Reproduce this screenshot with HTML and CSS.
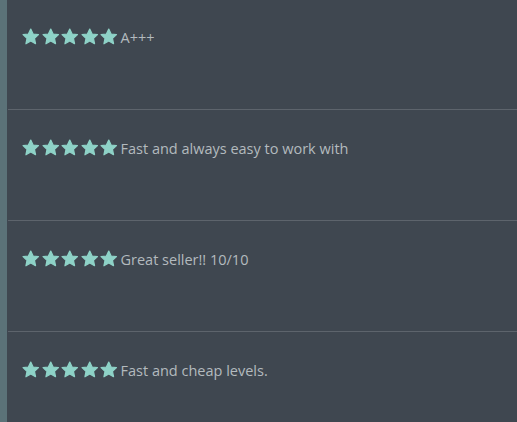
FILE: index.html
```html
<!DOCTYPE html>
<html>
<head>
<meta charset="utf-8">
<link rel="stylesheet" href="styles.css">
</head>
<body>
<div class="panel">
  <div class="list">
    <div class="review">
      <span class="stars">
        <svg class="star" viewBox="0 0 24 24"><path d="M12 2.5l2.9 6.1 6.6.8-4.9 4.6 1.3 6.6L12 17.3l-5.9 3.3 1.3-6.6-4.9-4.6 6.6-.8z"/></svg>
        <svg class="star" viewBox="0 0 24 24"><path d="M12 2.5l2.9 6.1 6.6.8-4.9 4.6 1.3 6.6L12 17.3l-5.9 3.3 1.3-6.6-4.9-4.6 6.6-.8z"/></svg>
        <svg class="star" viewBox="0 0 24 24"><path d="M12 2.5l2.9 6.1 6.6.8-4.9 4.6 1.3 6.6L12 17.3l-5.9 3.3 1.3-6.6-4.9-4.6 6.6-.8z"/></svg>
        <svg class="star" viewBox="0 0 24 24"><path d="M12 2.5l2.9 6.1 6.6.8-4.9 4.6 1.3 6.6L12 17.3l-5.9 3.3 1.3-6.6-4.9-4.6 6.6-.8z"/></svg>
        <svg class="star" viewBox="0 0 24 24"><path d="M12 2.5l2.9 6.1 6.6.8-4.9 4.6 1.3 6.6L12 17.3l-5.9 3.3 1.3-6.6-4.9-4.6 6.6-.8z"/></svg>
      </span>
      <span class="text">A+++</span>
    </div>
    <div class="review">
      <span class="stars">
        <svg class="star" viewBox="0 0 24 24"><path d="M12 2.5l2.9 6.1 6.6.8-4.9 4.6 1.3 6.6L12 17.3l-5.9 3.3 1.3-6.6-4.9-4.6 6.6-.8z"/></svg>
        <svg class="star" viewBox="0 0 24 24"><path d="M12 2.5l2.9 6.1 6.6.8-4.9 4.6 1.3 6.6L12 17.3l-5.9 3.3 1.3-6.6-4.9-4.6 6.6-.8z"/></svg>
        <svg class="star" viewBox="0 0 24 24"><path d="M12 2.5l2.9 6.1 6.6.8-4.9 4.6 1.3 6.6L12 17.3l-5.9 3.3 1.3-6.6-4.9-4.6 6.6-.8z"/></svg>
        <svg class="star" viewBox="0 0 24 24"><path d="M12 2.5l2.9 6.1 6.6.8-4.9 4.6 1.3 6.6L12 17.3l-5.9 3.3 1.3-6.6-4.9-4.6 6.6-.8z"/></svg>
        <svg class="star" viewBox="0 0 24 24"><path d="M12 2.5l2.9 6.1 6.6.8-4.9 4.6 1.3 6.6L12 17.3l-5.9 3.3 1.3-6.6-4.9-4.6 6.6-.8z"/></svg>
      </span>
      <span class="text">Fast and always easy to work with</span>
    </div>
    <div class="review">
      <span class="stars">
        <svg class="star" viewBox="0 0 24 24"><path d="M12 2.5l2.9 6.1 6.6.8-4.9 4.6 1.3 6.6L12 17.3l-5.9 3.3 1.3-6.6-4.9-4.6 6.6-.8z"/></svg>
        <svg class="star" viewBox="0 0 24 24"><path d="M12 2.5l2.9 6.1 6.6.8-4.9 4.6 1.3 6.6L12 17.3l-5.9 3.3 1.3-6.6-4.9-4.6 6.6-.8z"/></svg>
        <svg class="star" viewBox="0 0 24 24"><path d="M12 2.5l2.9 6.1 6.6.8-4.9 4.6 1.3 6.6L12 17.3l-5.9 3.3 1.3-6.6-4.9-4.6 6.6-.8z"/></svg>
        <svg class="star" viewBox="0 0 24 24"><path d="M12 2.5l2.9 6.1 6.6.8-4.9 4.6 1.3 6.6L12 17.3l-5.9 3.3 1.3-6.6-4.9-4.6 6.6-.8z"/></svg>
        <svg class="star" viewBox="0 0 24 24"><path d="M12 2.5l2.9 6.1 6.6.8-4.9 4.6 1.3 6.6L12 17.3l-5.9 3.3 1.3-6.6-4.9-4.6 6.6-.8z"/></svg>
      </span>
      <span class="text">Great seller!! 10/10</span>
    </div>
    <div class="review">
      <span class="stars">
        <svg class="star" viewBox="0 0 24 24"><path d="M12 2.5l2.9 6.1 6.6.8-4.9 4.6 1.3 6.6L12 17.3l-5.9 3.3 1.3-6.6-4.9-4.6 6.6-.8z"/></svg>
        <svg class="star" viewBox="0 0 24 24"><path d="M12 2.5l2.9 6.1 6.6.8-4.9 4.6 1.3 6.6L12 17.3l-5.9 3.3 1.3-6.6-4.9-4.6 6.6-.8z"/></svg>
        <svg class="star" viewBox="0 0 24 24"><path d="M12 2.5l2.9 6.1 6.6.8-4.9 4.6 1.3 6.6L12 17.3l-5.9 3.3 1.3-6.6-4.9-4.6 6.6-.8z"/></svg>
        <svg class="star" viewBox="0 0 24 24"><path d="M12 2.5l2.9 6.1 6.6.8-4.9 4.6 1.3 6.6L12 17.3l-5.9 3.3 1.3-6.6-4.9-4.6 6.6-.8z"/></svg>
        <svg class="star" viewBox="0 0 24 24"><path d="M12 2.5l2.9 6.1 6.6.8-4.9 4.6 1.3 6.6L12 17.3l-5.9 3.3 1.3-6.6-4.9-4.6 6.6-.8z"/></svg>
      </span>
      <span class="text">Fast and cheap levels.</span>
    </div>
  </div>
</div>
</body>
</html>
```

FILE: styles.css
```css
html, body {
  margin: 0;
  padding: 0;
  background: #3f4750;
  height: 100%;
  overflow: hidden;
}
.panel {
  display: flex;
  height: 100%;
  border-left: 7px solid #5b7278;
  box-sizing: border-box;
  background: #3f4750;
}
.list {
  flex: 1;
  margin-top: -1px;
  padding-left: 1px;
}
.review {
  display: flex;
  align-items: flex-start;
  height: 111px;
  padding: 28px 0 0 13px;
  box-sizing: border-box;
  border-bottom: 1px solid #5d646c;
}
.stars {
  display: flex;
}
.star {
  width: 19.5px;
  height: 19.5px;
  display: block;
  fill: #8ed2c7;
  stroke: #8ed2c7;
  stroke-width: 1.5;
  stroke-linejoin: round;
}
.text {
  margin-left: 2px;
  margin-top: 1px;
  font-family: "Open Sans", sans-serif;
  font-size: 14.5px;
  line-height: 20px;
  color: #b3babe;
}
```
